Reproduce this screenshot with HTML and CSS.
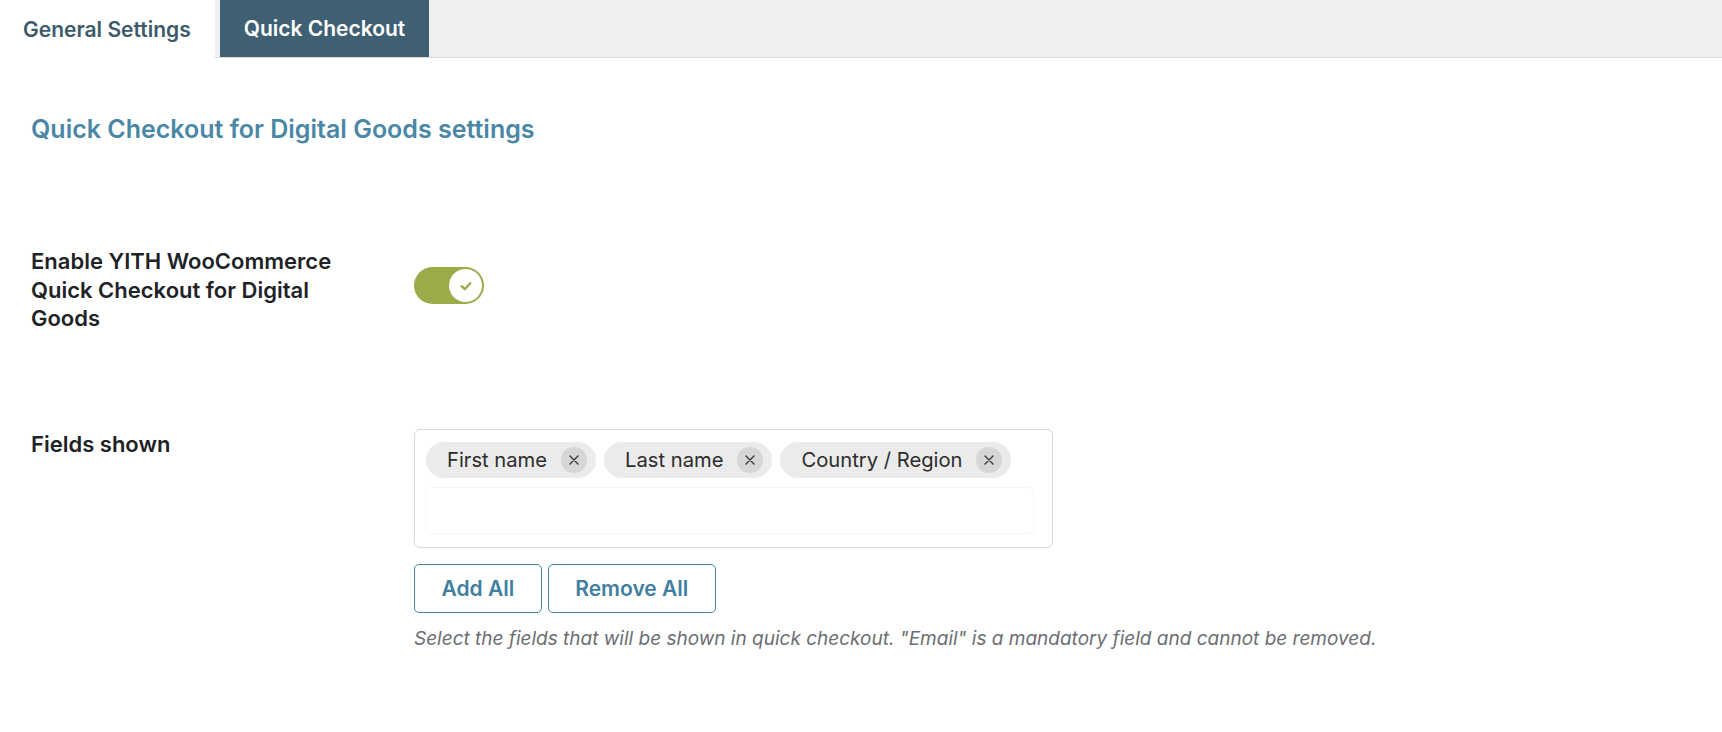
FILE: index.html
```html
<!DOCTYPE html>
<html lang="en">
<head>
  <meta charset="UTF-8" />
  <meta name="viewport" content="width=device-width, initial-scale=1.0"/>
  <title>Quick Checkout for Digital Goods</title>
  <link rel="stylesheet" href="styles.css">
</head>
<body>
  <nav class="tabs">
    <a class="tab">General Settings</a>
    <a class="tab active">Quick Checkout</a>
  </nav>

  <main class="panel">
    <h2 class="panel-title">Quick Checkout for Digital Goods settings</h2>

    <div class="option-row first">
      <div class="option-label">Enable YITH WooCommerce Quick Checkout for Digital Goods</div>
      <div class="option-field">
        <span class="toggle on">
          <span class="knob">
            <svg width="14" height="14" viewBox="0 0 14 14"><path d="M2.6 7.2 L5.8 10.2 L11.2 4.2" fill="none" stroke="#9aab4a" stroke-width="2.4" stroke-linecap="round" stroke-linejoin="round"/></svg>
          </span>
        </span>
      </div>
    </div>

    <div class="option-row second">
      <div class="option-label">Fields shown</div>
      <div class="option-field">
        <div class="select-box">
          <div class="chips">
            <span class="chip">First name <span class="chip-x"><svg width="10" height="10" viewBox="0 0 10 10"><path d="M1 1 L9 9 M9 1 L1 9" stroke="#3a3a3a" stroke-width="1.4" stroke-linecap="round"/></svg></span></span>
            <span class="chip">Last name <span class="chip-x"><svg width="10" height="10" viewBox="0 0 10 10"><path d="M1 1 L9 9 M9 1 L1 9" stroke="#3a3a3a" stroke-width="1.4" stroke-linecap="round"/></svg></span></span>
            <span class="chip">Country / Region <span class="chip-x"><svg width="10" height="10" viewBox="0 0 10 10"><path d="M1 1 L9 9 M9 1 L1 9" stroke="#3a3a3a" stroke-width="1.4" stroke-linecap="round"/></svg></span></span>
          </div>
          <div class="select-search"></div>
        </div>
        <div class="select-buttons">
          <button class="btn">Add All</button>
          <button class="btn">Remove All</button>
        </div>
        <p class="description">Select the fields that will be shown in quick checkout. "Email" is a mandatory field and cannot be removed.</p>
      </div>
    </div>
  </main>
</body>
</html>
```

FILE: styles.css
```css
body {
  margin: 0;
  background: #fff;
  font-family: Inter, "Noto Sans", sans-serif;
  color: #1e2327;
}
.tabs {
  display: flex;
  gap: 5px;
  height: 57px;
  background: #efefef;
  border-bottom: 1px solid #dcdcdc;
}
.tab {
  display: flex;
  align-items: center;
  padding: 0 24px;
  font-size: 21px;
  font-weight: 600;
  color: #3d5a6b;
  cursor: pointer;
}
.tab:first-child {
  background: #fff;
  height: 58px;
  padding: 0 24px 0 23px;
}
.tab.active {
  background: #3e6072;
  color: #fff;
}
.panel {
  padding: 56px 31px 40px;
}
.panel-title {
  margin: 0;
  font-size: 25px;
  line-height: 30px;
  font-weight: 600;
  color: #4a87a6;
}
.option-row {
  display: flex;
}
.option-row.first {
  margin-top: 103px;
}
.option-row.second {
  margin-top: 96px;
}
.option-label {
  width: 312px;
  margin-right: 71px;
  font-size: 22px;
  line-height: 28.5px;
  font-weight: 600;
}
.second .option-label {
  padding-top: 1px;
}
.toggle {
  display: block;
  margin-top: 20px;
  width: 70px;
  height: 37px;
  border-radius: 19px;
  background: #9aab4a;
  position: relative;
}
.knob {
  position: absolute;
  top: 2px;
  right: 2px;
  width: 33px;
  height: 33px;
  border-radius: 50%;
  background: #fff;
  display: flex;
  align-items: center;
  justify-content: center;
}
.select-box {
  width: 615px;
  padding: 12px 11px 13px;
  border: 1px solid #d3d7db;
  border-radius: 6px;
}
.chips {
  display: flex;
  gap: 8px;
}
.chip {
  display: flex;
  align-items: center;
  height: 36px;
  padding: 0 9px 0 21px;
  border-radius: 18px;
  background: #ebebeb;
  font-size: 20.2px;
  color: #2c2c2c;
}
.chip-x {
  display: flex;
  align-items: center;
  justify-content: center;
  width: 26px;
  height: 26px;
  margin-left: 14px;
  border-radius: 50%;
  background: #d6d6d6;
}
.select-search {
  height: 45px;
  margin: 9px 7px 0 -1px;
  border: 1px solid #f6f6f6;
  border-radius: 6px;
}
.select-buttons {
  display: flex;
  gap: 6px;
  margin-top: 16px;
}
.btn {
  height: 49px;
  padding: 0 26.5px;
  background: #fff;
  border: 1px solid #4a87a6;
  border-radius: 5px;
  font-family: inherit;
  font-size: 21px;
  font-weight: 600;
  color: #3f7fa0;
  cursor: pointer;
}
.description {
  margin: 14px 0 0;
  font-size: 19px;
  line-height: 24px;
  font-style: italic;
  color: #6b6e72;
}
```
